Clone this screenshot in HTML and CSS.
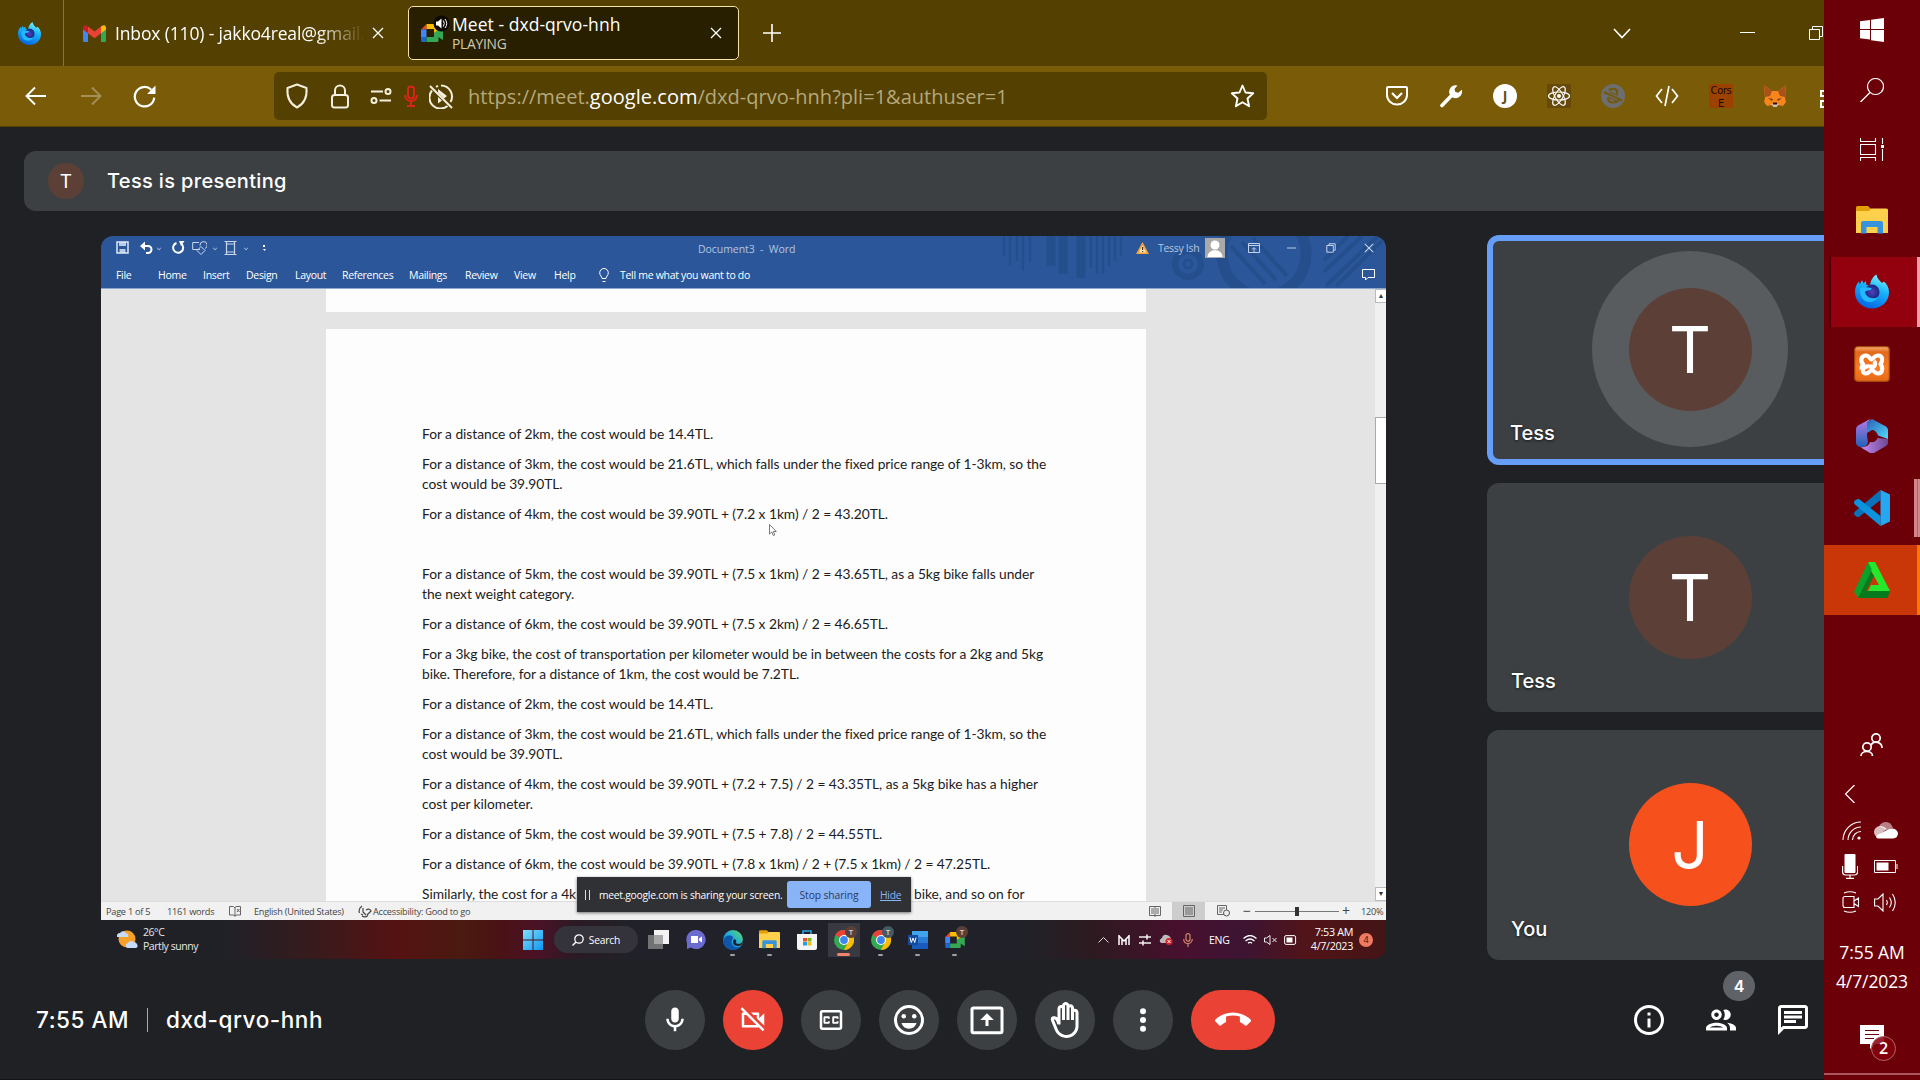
FILE: index.html
```html
<!DOCTYPE html>
<html lang="en">
<head>
<meta charset="utf-8">
<title>Meet - dxd-qrvo-hnh</title>
<link rel="stylesheet" href="styles.css">
</head>
<body>
<svg class="sprite" aria-hidden="true">
  <defs>
    <linearGradient id="ffg" x1="0.7" y1="0" x2="0.3" y2="1"><stop offset="0" stop-color="#7ff6ff"/><stop offset=".4" stop-color="#18b4fb"/><stop offset="1" stop-color="#0560e0"/></linearGradient>
    <radialGradient id="ffc"><stop offset="0" stop-color="#5040c0"/><stop offset="1" stop-color="#17287e"/></radialGradient>
    <linearGradient id="edge" x1="0" y1="1" x2="1" y2="0"><stop offset="0" stop-color="#0b62c4"/><stop offset=".5" stop-color="#22a6e0"/><stop offset="1" stop-color="#5fe05a"/></linearGradient>
    <linearGradient id="win" x1="0" y1="0" x2="1" y2="1"><stop offset="0" stop-color="#7fe0ff"/><stop offset="1" stop-color="#0c97ee"/></linearGradient>
    <linearGradient id="offa" x1="0" y1="0" x2="0" y2="1"><stop offset="0" stop-color="#b779e4"/><stop offset="1" stop-color="#1d63b8"/></linearGradient>
    <linearGradient id="offb" x1="0" y1="0" x2="1" y2="1"><stop offset="0" stop-color="#2a5fb5"/><stop offset="1" stop-color="#4fdcff"/></linearGradient>
    <linearGradient id="offc" x1="0" y1="0" x2="1" y2="0"><stop offset="0" stop-color="#c58cf2"/><stop offset="1" stop-color="#6b4791"/></linearGradient>
    <linearGradient id="xam" x1="0" y1="0" x2="0" y2="1"><stop offset="0" stop-color="#ffb27a"/><stop offset=".15" stop-color="#e06a1c"/><stop offset=".6" stop-color="#fb7a24"/><stop offset="1" stop-color="#e56a17"/></linearGradient>
  </defs>
  <symbol id="firefox" viewBox="0 0 34 34">
    <path d="M17 34C7.500 34 0 27 0 17.500 0 13 1.500 9.500 4 7l.8 3L7 5.500 8.500 9l2.500-2.500.3 4L15 11c.5-5 3-9 6.500-11 .5 4 3 6 5.500 8.500l2-1.500C32 10 34 13 34 18c0 9-7.500 16-17 16z" fill="url(#ffg)"/>
    <circle cx="17" cy="17.500" r="7.500" fill="url(#ffc)"/>
    <path d="M5 14c4-2 8-1.500 12 0-2 3-5 1-7 3.500 1 5 7 8 13 5-3 6-12 7-16 1-1.500-3-2-6-2-9.500z" fill="#23b9ff"/>
  </symbol>
  <symbol id="meetlogo" viewBox="0 0 22 18">
    <path d="M0 5.500L5.500 0v5.500z" fill="#ea4335"/><path d="M5.500 0H16a1.500 1.500 0 0 1 1.500 1.500V8L13 9V5H5.500z" fill="#fbbc04"/>
    <path d="M0 5.500h5.500v7.500H0z" fill="#4285f4"/><path d="M0 13h5.500v5H1.500A1.500 1.500 0 0 1 0 16.500z" fill="#1967d2"/>
    <path d="M5.500 13H13V9l4.500-3.500L21 2.500q1-.5 1 .7v12q0 1-1 .4L17.500 13v3.500A1.500 1.500 0 0 1 16 18H5.500z" fill="#34a853"/>
  </symbol>
  <symbol id="chrome" viewBox="0 0 20 20">
    <circle cx="10" cy="10" r="10" fill="#34a853"/><path d="M10 10L1.300 5A10 10 0 0 1 18.700 5z" fill="#ea4335"/><path d="M18.700 5A10 10 0 0 1 10 20l4-8L10 5z" fill="#fbbc04"/>
    <circle cx="10" cy="10" r="5" fill="#fff"/><circle cx="10" cy="10" r="3.900" fill="#3f86f2"/>
  </symbol>
  <symbol id="folder" viewBox="0 0 32 28">
    <path d="M0 1.500Q0 0 1.500 0H12l3 3v4H0z" fill="#e3a008"/><path d="M0 5h13l2-2.500h15.500Q32 2.500 32 4v23H0z" fill="#ffd04c"/>
    <path d="M5 27.500V17q0-2 2-2h18q2 0 2 2v10.500h-5.500V21H10.500v6.500z" fill="#3794dc"/>
  </symbol>
  <symbol id="close" viewBox="0 0 12 12"><path d="M1 1l10 10M11 1L1 11" stroke="currentColor" stroke-width="1.300" fill="none"/></symbol>
  <symbol id="restore" viewBox="0 0 14 14"><path d="M.5 3.500h10v10H.5zM3.500 3V.5h10v10H11" stroke="currentColor" fill="none"/></symbol>
</svg>

<div class="desktop">
  <header class="tabs">
    <div class="pinned"><svg width="23" height="23"><use href="#firefox"/></svg></div>
    <div class="tab">
      <svg width="23" height="17" viewBox="0 0 23 17"><path d="M0 2.500V15.500Q0 17 1.500 17H5V7z" fill="#4285f4"/><path d="M23 2.500V15.500Q23 17 21.500 17H18V7z" fill="#34a853"/><path d="M5 1.500v6.800l6.500 4.900L18 8.300V1.500l-6.500 5z" fill="#ea4335"/><path d="M0 2.500Q.5-1 4 .7l1 .8v6.800L0 4.500z" fill="#c5221f"/><path d="M23 2.500Q22.500-1 19 .7l-1 .8v6.800l5-3.800z" fill="#fbbc04"/></svg>
      <span class="tab-title">Inbox (110) - jakko4real@gmail.com</span>
      <svg class="tab-x" width="12" height="12"><use href="#close"/></svg>
    </div>
    <div class="tab active">
      <div class="fav"><svg width="22" height="18"><use href="#meetlogo"/></svg>
        <svg class="sound" width="17" height="17" viewBox="0 0 16 17"><circle cx="8" cy="8.500" r="8" fill="#0c0900"/><path d="M2.500 6.500h2L8 3.500v10l-3.500-3h-2z" fill="#fff"/><path d="M9.800 5.500q2 3 0 6M11.500 4q3.500 4.500 0 9" stroke="#fff" fill="none"/></svg></div>
      <div class="tab-text"><b>Meet - dxd-qrvo-hnh</b><small>PLAYING</small></div>
      <svg class="tab-x" width="12" height="12"><use href="#close"/></svg>
    </div>
    <svg class="plus" width="18" height="18" viewBox="0 0 18 18"><path d="M9 0v18M0 9h18" stroke="#fff" stroke-width="1.600"/></svg>
    <div class="wincontrols">
      <svg width="18" height="11" viewBox="0 0 18 11"><path d="M1 1l8 8.500L17 1" stroke="#fff" stroke-width="1.600" fill="none"/></svg>
      <svg width="15" height="2"><path d="M0 .5h15" stroke="#fff" stroke-width="1"/></svg>
      <svg class="white" width="14" height="14"><use href="#restore"/></svg>
    </div>
  </header>

  <nav class="nav">
    <div class="navbtns">
      <svg width="22" height="20" viewBox="0 0 22 20"><path d="M21 10H1.500M10 1.500L1.500 10l8.500 8.500" stroke="#fff" stroke-width="1.900" fill="none"/></svg>
      <svg width="22" height="20" viewBox="0 0 22 20"><path d="M1 10h19.500M12 1.500l8.500 8.500-8.500 8.500" stroke="#a58f56" stroke-width="1.900" fill="none"/></svg>
      <svg class="reload" width="23" height="23" viewBox="0 0 22 22"><path d="M17.500 4.500A9.300 9.300 0 1 0 20.300 12" stroke="#fff" stroke-width="2.100" fill="none"/><path d="M21.500.5v8h-8z" fill="#fff"/></svg>
    </div>
    <div class="urlbar">
      <div class="urlicons">
        <svg width="24" height="26" viewBox="0 0 24 26"><path d="M12 1.500L21.500 5c.8 9-3 16-9.500 19.500C5.500 21 1.700 14 2.500 5z" stroke="#f4efdf" stroke-width="2" fill="none" stroke-linejoin="round"/></svg>
        <svg width="20" height="25" viewBox="0 0 20 25"><rect x="2" y="11" width="16" height="12.500" rx="2.500" stroke="#f4efdf" stroke-width="2" fill="none"/><path d="M5 11V6.500a5 5 0 0 1 10 0V11" stroke="#f4efdf" stroke-width="2" fill="none"/></svg>
        <svg width="22" height="16" viewBox="0 0 22 16"><g stroke="#f4efdf" stroke-width="2" fill="none"><path d="M1 3.500h12M9.500 12.500H21"/><circle cx="18" cy="3.500" r="2.500"/><circle cx="4" cy="12.500" r="2.500"/></g></svg>
        <svg width="14" height="22" viewBox="0 0 14 22"><g stroke="#dc2418" stroke-width="2" fill="none"><rect x="4" y="1.500" width="6" height="12" rx="3"/><path d="M1 10c0 8 12 8 12 0M7 16v4M3 21h8"/></g></svg>
        <svg width="25" height="25" viewBox="0 0 25 25"><g stroke="#f4efdf" stroke-width="2" fill="none"><path d="M3 6.500A11 11 0 0 0 18.500 22M7 2.800l2-1M12 1.500a11 11 0 0 1 9.500 16.500M1 2l22 22"/></g><path d="M9 5l9 7-3 2.500L9 8.500zM9 13l4 3.500-4 3z" fill="#f4efdf"/></svg>
      </div>
      <div class="url">https://meet.<b>google.com</b>/dxd-qrvo-hnh?pli=1&amp;authuser=1</div>
      <svg class="star" width="25" height="24" viewBox="0 0 25 24"><path d="M12.500 1.500l3 7 7.700.8-5.700 5.200 1.600 7.700-6.600-4-6.600 4 1.600-7.700L1.800 9.300l7.700-.8z" stroke="#fff" stroke-width="1.900" fill="none" stroke-linejoin="round"/></svg>
    </div>
    <div class="exts">
      <svg width="24" height="24" viewBox="0 0 24 24"><path d="M3 3h18q1 0 1 1v7a10 9.500 0 0 1-20 0V4q0-1 1-1z" stroke="#fff" stroke-width="2" fill="none"/><path d="M7 9l5 5 5-5" stroke="#fff" stroke-width="2.200" fill="none"/></svg>
      <svg width="24" height="24" viewBox="0 0 24 24"><path d="M3 21.500L15 9" stroke="#fff" stroke-width="3.600" stroke-linecap="round"/><path d="M18.500 1.500l-3 3.500.8 3 3 .8 3.500-3A6.500 6.500 0 1 1 18.500 1.500z" fill="#fff"/></svg>
      <div class="ext-j">J</div>
      <svg width="24" height="24" viewBox="0 0 24 24"><rect width="24" height="24" rx="2" fill="#64490a"/><g stroke="#fff" fill="none" stroke-width="1.200"><ellipse cx="12" cy="12" rx="10.500" ry="4"/><ellipse cx="12" cy="12" rx="10.500" ry="4" transform="rotate(60 12 12)"/><ellipse cx="12" cy="12" rx="10.500" ry="4" transform="rotate(120 12 12)"/></g><circle cx="12" cy="12" r="2" fill="#fff"/></svg>
      <svg width="24" height="24" viewBox="0 0 24 24"><circle cx="12" cy="12" r="12" fill="#6c6e70"/><g stroke="#73590e" fill="none"><path d="M8 6.500a4.500 3 0 0 1 8 0v3.500M7 14q0 4.500 5 4.500t6-3.500" stroke-width="2.200"/><path d="M3 8l18 8.500" stroke-width="2"/><path d="M9 8l8 3.500M6.500 13l9 4" stroke-width="1.200"/></g></svg>
      <svg width="24" height="24" viewBox="0 0 24 24"><path d="M7 5L1.500 12 7 19M17 5l5.500 7-5.500 7M14 2l-4 20" stroke="#fff" stroke-width="1.700" fill="none"/></svg>
      <div class="ext-cors">Cors<br>E</div>
      <svg width="24" height="24" viewBox="0 0 24 24"><path d="M1 1l8 6h6l8-6-1 13 1 4-3 4-5-1-2 2h-2l-2-2-5 1-3-4 1-4z" fill="#f6851b"/><path d="M1 1l8 6-2 5-5 1zM23 1l-8 6 2 5 5 1z" fill="#a8521b"/><path d="M5 14l5 1-1 2zM19 14l-5 1 1 2z" fill="#763d16"/><path d="M8 20h8l-2.500 3h-3z" fill="#d5bfb2"/><path d="M10 18.500h4v2h-4z" fill="#1c1715"/></svg>
      <svg width="24" height="24" viewBox="0 0 24 24"><g stroke="#fff" stroke-width="2" fill="none"><rect x="4" y="7" width="6.500" height="5"/><rect x="4" y="17" width="7" height="6"/></g></svg>
    </div>
  </nav>

  <main class="meet">
    <section class="banner"><div class="mini-avatar">T</div><span>Tess is presenting</span></section>
    <section class="stage">
      <div class="share">
        <div class="word-head">
          <svg class="deco" width="390" height="52" viewBox="0 0 390 52"><g stroke="#254f8c" fill="none"><path d="M8 0v20M14 0v30M21 0v25M27 0v35M34 0v26M95 0v32M101 0v38M107 0v38M113 0v30M119 0v25M125 0v20" stroke-width="2.500"/><path d="M55 0v30M67 0v38M85 0v42" stroke-width="9"/><circle cx="192" cy="28" r="13" stroke-width="6"/><circle cx="192" cy="28" r="4" stroke-width="3"/><circle cx="268" cy="18" r="42" stroke-width="11"/><path d="M235 10l34 38M246 6l34 38M257 2l34 38M330 50l52-50M340 50l46-45M328 36l38-36M328 24l24-24" stroke-width="4"/></g></svg>
          <div class="word-title">
            <div class="qat">
              <svg width="13" height="13" viewBox="0 0 13 13"><path d="M1 1h11v11H1z" stroke="#dfe8f5" stroke-width="1.500" fill="none"/><path d="M3 1h7v4H3zM3.500 8h6v4h-6z" fill="#dfe8f5" fill-opacity=".8"/></svg>
              <svg width="13" height="13" viewBox="0 0 13 13"><path d="M2 5h6a3.500 3.500 0 0 1 0 7H6" stroke="#fff" stroke-width="2" fill="none"/><path d="M0 5l5-4.500v9z" fill="#fff"/></svg>
              <i class="car"></i>
              <svg width="13" height="13" viewBox="0 0 13 13"><path d="M4.500 2a5 5 0 1 0 5 1" stroke="#fff" stroke-width="2" fill="none"/><path d="M7 0h5.500L9 5z" fill="#fff"/></svg>
              <svg width="15" height="14" viewBox="0 0 15 14"><path d="M8 8.500H.7v-7H7M8 4.500a3.600 3.600 0 1 1 5 3M9 5.500l4 4-4 4-4-4z" stroke="#c9d8ee" fill="none"/></svg>
              <i class="car"></i>
              <svg width="13" height="14" viewBox="0 0 13 14"><path d="M2.500 0v14M10.500 0v14M.5.500h12M.5 13.500h12M2.500 3h8M2.500 11h8" stroke="#c9d8ee" stroke-width="1.200"/></svg>
              <i class="car"></i>
              <svg width="4" height="8" viewBox="0 0 4 8"><path d="M1 1h2v2H1zM1 5h3l-1.500 2z" fill="#fff"/></svg>
            </div>
            <span class="doc-name">Document3 &nbsp;- &nbsp;Word</span>
            <div class="word-right">
              <svg width="13" height="12" viewBox="0 0 13 12"><path d="M6.500 0L13 12H0z" fill="#f3a33c"/><path d="M6.500 3.500L10 10.500H3z" fill="#fbe3b5"/><path d="M6 5h1.200v3H6zM6 9h1.200v1H6z" fill="#333"/></svg>
              <span>Tessy Ish</span>
              <svg width="20" height="20" viewBox="0 0 20 20"><path fill="#a9a9a9" d="M0 0h20v20H0z"/><circle cx="10" cy="7" r="4.500" fill="#fff"/><path d="M2.500 19c0-9 15-9 15 0z" fill="#fff"/></svg>
              <svg width="12" height="10" viewBox="0 0 12 10"><path d="M.5.500h11v9H.5zM.5 2.500h11M6 9V5M4 6.500l2-2 2 2" stroke="#c5d3ea" fill="none"/></svg>
              <svg width="10" height="2"><path d="M0 1h9" stroke="#b9cae5"/></svg>
              <svg width="10" height="10" viewBox="0 0 10 10"><path d="M.8 2.500h6.500V9.200H.8zM3 2V.8h6.200v6.500H8" stroke="#c5d3ea" fill="none"/></svg>
              <svg class="pale" width="10" height="10"><use href="#close"/></svg>
            </div>
          </div>
          <div class="word-menu">
            <span>File</span><span>Home</span><span>Insert</span><span>Design</span><span>Layout</span><span>References</span><span>Mailings</span><span>Review</span><span>View</span><span>Help</span>
            <svg width="10" height="15" viewBox="0 0 10 15"><path d="M3 10.500C3 8.500.7 7.500.7 4.800a4.300 4.300 0 0 1 8.600 0C9.300 7.500 7 8.500 7 10.500zM3.500 13.500h3" stroke="#fff" fill="none"/></svg>
            <span>Tell me what you want to do</span>
            <svg class="comment" width="13" height="12" viewBox="0 0 13 12"><path d="M.5.500h12v8H6l-2.500 2.500V8.500h-3z" stroke="#fff" fill="none"/></svg>
          </div>
        </div>
        <div class="word-body">
          <div class="pages">
            <div class="prev-page"></div>
            <div class="page">
              <p>For a distance of 2km, the cost would be 14.4TL.</p>
              <p>For a distance of 3km, the cost would be 21.6TL, which falls under the fixed price range of 1-3km, so the<br>cost would be 39.90TL.</p>
              <p>For a distance of 4km, the cost would be 39.90TL + (7.2 x 1km) / 2 = 43.20TL.</p>
              <p>&nbsp;</p>
              <p>For a distance of 5km, the cost would be 39.90TL + (7.5 x 1km) / 2 = 43.65TL, as a 5kg bike falls under<br>the next weight category.</p>
              <p>For a distance of 6km, the cost would be 39.90TL + (7.5 x 2km) / 2 = 46.65TL.</p>
              <p>For a 3kg bike, the cost of transportation per kilometer would be in between the costs for a 2kg and 5kg<br>bike. Therefore, for a distance of 1km, the cost would be 7.2TL.</p>
              <p>For a distance of 2km, the cost would be 14.4TL.</p>
              <p>For a distance of 3km, the cost would be 21.6TL, which falls under the fixed price range of 1-3km, so the<br>cost would be 39.90TL.</p>
              <p>For a distance of 4km, the cost would be 39.90TL + (7.2 + 7.5) / 2 = 43.35TL, as a 5kg bike has a higher<br>cost per kilometer.</p>
              <p>For a distance of 5km, the cost would be 39.90TL + (7.5 + 7.8) / 2 = 44.55TL.</p>
              <p>For a distance of 6km, the cost would be 39.90TL + (7.8 x 1km) / 2 + (7.5 x 1km) / 2 = 47.25TL.</p>
              <p class="split"><span>Similarly, the cost for a 4k</span><span>bike, and so on for</span></p>
            </div>
          </div>
          <div class="scroll"><i>▲</i><b></b><i>▼</i></div>
          <svg class="cursor" width="8" height="12" viewBox="0 0 8 12"><path d="M.5.500v9.500l2.300-2 1.500 3.500 1.500-.7-1.500-3.300h3z" fill="#fff" stroke="#555" stroke-width=".8"/></svg>
          <div class="sharebar"><i class="pause"></i><span>meet.google.com is sharing your screen.</span><button>Stop sharing</button><u>Hide</u></div>
        </div>
        <div class="status">
          <span>Page 1 of 5</span><span>1161 words</span>
          <svg width="12" height="11" viewBox="0 0 12 11"><path d="M.5.500h4L6 2l1-1.500h4.500V9H7L6 10.500 5 9H.5zM6 2v8M8 3l2.500 3M10.500 3L8 6" stroke="#666" fill="none"/></svg>
          <span>English (United States)</span>
          <span class="acc"><svg width="14" height="13" viewBox="0 0 14 13"><path d="M4 1Q0 4 1.500 8M4 11q3 2 6-.5M5 3v4l3 3M8 5q4-2 5 1l-4 4M3 9l2 1" stroke="#444" stroke-width="1.200" fill="none"/></svg>Accessibility: Good to go</span>
          <div class="views">
            <svg width="12" height="11" viewBox="0 0 12 11"><path d="M.5.500h11v9H.5zM6 0v11M2 3h3M2 5h3M2 7h3M7 3h3M7 5h3M7 7h3" stroke="#666" fill="none"/></svg>
            <i><svg width="12" height="12" viewBox="0 0 12 12"><path d="M.5.500h11v11H.5zM2 3h8M2 5h8M2 7h8M2 9h8" stroke="#666" fill="none"/></svg></i>
            <svg width="13" height="12" viewBox="0 0 13 12"><path d="M.5.500h9v9H.5zM2 3h6M2 5h4M2 7h3" stroke="#666" fill="none"/><circle cx="9.500" cy="8" r="3" fill="#eee" stroke="#555"/></svg>
            <em>−</em><s><b></b></s><em>+</em><span>120%</span>
          </div>
        </div>
        <div class="w11">
          <svg class="weather" width="21" height="19" viewBox="0 0 21 19"><circle cx="10" cy="9" r="8.500" fill="#f6a02c"/><path d="M0 7a3 3 0 0 1 3-4 3.500 3.500 0 0 1 6 0q3 1 2 4zM9 17a3 3 0 0 1 2-4 4 4 0 0 1 6-1q4 1 3.500 5-1 1-2 1h-8z" fill="#c5dbf7"/></svg>
          <div class="wtext">26°C<br>Partly sunny</div>
          <div class="apps">
            <svg width="20" height="20" viewBox="0 0 20 20"><path d="M0 0h9.500v9.500H0zM10.500 0H20v9.500h-9.500zM0 10.500h9.500V20H0zM10.500 10.500H20V20h-9.500z" fill="url(#win)"/></svg>
            <div class="pill"><svg width="12" height="12" viewBox="0 0 12 12"><circle cx="7" cy="5" r="4.200" stroke="#fff" stroke-width="1.300" fill="none"/><path d="M4 8L.5 11.500" stroke="#fff" stroke-width="1.500"/></svg>Search</div>
            <div class="app"><svg width="21" height="19" viewBox="0 0 21 19"><path d="M6 0h15v14H6z" fill="#f3f3f3"/><path d="M0 5h15v14H0z" fill="#8f8f8f" fill-opacity=".75"/></svg></div>
            <div class="app"><svg width="20" height="19" viewBox="0 0 20 19"><path d="M10 0a9.500 9.500 0 1 1-5 17.500L1 19V13A9.500 9.500 0 0 1 10 0z" fill="#6c6bd0"/><path d="M5 6h7v7H5zM13 8.500l3-2v6l-3-2z" fill="#fff"/></svg></div>
            <div class="app dot"><svg width="20" height="20" viewBox="0 0 20 20"><circle cx="10" cy="10" r="10" fill="url(#edge)"/><path d="M10 8q-4 6 2 9 4 1 7-2-5 6-11 5Q1 18 0 11q2-6 7-5.500 3 0 3 2.500z" fill="#0e57a8"/><path d="M11 9q3 1 2 3-1 1 2 2 4 0 5-4 0 5-4 6-7 0-6-5z" fill="#1c2027"/></svg></div>
            <div class="app dot"><svg width="21" height="19"><use href="#folder"/></svg></div>
            <div class="app"><svg width="20" height="20" viewBox="0 0 20 20"><path d="M6 5V1h8v4" stroke="#2aa8e8" stroke-width="1.500" fill="none"/><path d="M0 4h20v14q0 2-2 2H2q-2 0-2-2z" fill="#f5f5f5"/><path d="M6 8h4v3.500H6z" fill="#e8502a"/><path d="M10.500 8h4v3.500h-4z" fill="#7cb518"/><path d="M6 12h4v3.500H6z" fill="#1fa2ea"/><path d="M10.500 12h4v3.500h-4z" fill="#fbb914"/></svg></div>
            <div class="app cur"><svg width="20" height="20"><use href="#chrome"/></svg><em>T</em></div>
            <div class="app dot"><svg width="20" height="20"><use href="#chrome"/></svg><em class="teal">T</em></div>
            <div class="app dot"><svg width="20" height="18" viewBox="0 0 20 18"><path d="M4 0h16v6H4z" fill="#41a5ee"/><path d="M4 6h16v6H4z" fill="#2b7cd3"/><path d="M4 12h16v6H4z" fill="#185abd"/><path d="M0 4h10v10H0z" fill="#144a9e"/><path d="M2 6.500l1.300 5L5 7l1.700 4.500L8 6.500" stroke="#fff" fill="none"/></svg></div>
            <div class="app dot"><svg width="20" height="16"><use href="#meetlogo"/></svg><em>T</em></div>
          </div>
          <div class="tray">
            <svg width="11" height="6" viewBox="0 0 11 6"><path d="M.5 5.500l5-5 5 5" stroke="#ddd" fill="none"/></svg>
            <svg width="12" height="10" viewBox="0 0 12 10"><path d="M1 0v10M4 4v6M8 4v6M11 0v10M1 1l5 5 5-5" stroke="#fff" stroke-width="1.500" fill="none"/></svg>
            <svg width="12" height="12" viewBox="0 0 12 12"><path d="M0 3h12M0 9h12M8 .5v5M4 6.500v5" stroke="#eee" stroke-width="1.600"/></svg>
            <svg width="14" height="11" viewBox="0 0 14 11"><path d="M2 9Q-1 6 3 4q1-4 5-3 4 1 4 5v3z" fill="#bbb"/><circle cx="10" cy="7.500" r="3.500" fill="#d2232a"/><path d="M8.500 6l3 3M11.500 6l-3 3" stroke="#fff"/></svg>
            <svg width="10" height="14" viewBox="0 0 10 14"><g stroke="#d2876b" stroke-width="1.200" fill="none"><rect x="3" y=".7" width="4" height="7.500" rx="2"/><path d="M.7 6c0 6 8.600 6 8.600 0M5 10.500V14"/></g></svg>
            <span class="eng">ENG</span>
            <svg width="14" height="10" viewBox="0 0 14 10"><path d="M.5 3.500q6.500-6 13 0M2.500 6q4.500-4 9 0M5 8.200q2-1.500 4 0" stroke="#fff" stroke-width="1.200" fill="none"/></svg>
            <svg width="13" height="10" viewBox="0 0 13 10"><path d="M.5 3h2L6 .5v9L2.500 7h-2zM8.500 3l4 4M12.500 3l-4 4" stroke="#eee" fill="none"/></svg>
            <svg width="13" height="10" viewBox="0 0 13 10"><rect x=".6" y=".6" width="11" height="8.800" rx="1.500" stroke="#fff" fill="none"/><path d="M2.500 2.500h6v5h-6z" fill="#fff"/></svg>
            <div class="wclock">7:53 AM<br>4/7/2023</div>
            <b class="wbadge">4</b>
          </div>
        </div>
      </div>

      <div class="tiles">
        <div class="tile speaking"><div class="ring"><div class="avatar">T</div></div><span>Tess</span></div>
        <div class="tile"><div class="avatar">T</div><span>Tess</span></div>
        <div class="tile"><div class="avatar orange"><i>J</i></div><span>You</span></div>
      </div>
    </section>

    <footer class="controls">
      <div class="meeting"><span>7:55 AM</span><i></i><span>dxd-qrvo-hnh</span></div>
      <div class="buttons">
        <button><svg viewBox="0 0 24 24"><path d="M12 14c1.660 0 3-1.340 3-3V5c0-1.660-1.340-3-3-3S9 3.340 9 5v6c0 1.660 1.340 3 3 3zm5-3c0 2.760-2.240 5-5 5s-5-2.240-5-5H5c0 3.530 2.610 6.430 6 6.920V21h2v-3.080c3.390-.49 6-3.390 6-6.920h-2z"/></svg></button>
        <button class="red"><svg viewBox="0 0 24 24"><path d="M9.560 8l-2-2-4.150-4.140L2 3.270 4.730 6H4c-.55 0-1 .45-1 1v10c0 .55.45 1 1 1h12c.21 0 .39-.08.55-.18L19.730 21l1.410-1.410-8.860-8.860L9.560 8zM5 16V8h1.730l8 8H5zm10-8v2.610l6 6V6.500l-4 4V7c0-.55-.45-1-1-1h-5.610l2 2H15z"/></svg></button>
        <button><svg viewBox="0 0 24 24"><path d="M19 4H5c-1.110 0-2 .9-2 2v12c0 1.100.89 2 2 2h14c1.100 0 2-.9 2-2V6c0-1.100-.9-2-2-2zm0 14H5V6h14v12zM7 15h3c.55 0 1-.45 1-1v-1H9.500v.5h-2v-3h2v.5H11v-1c0-.55-.45-1-1-1H7c-.55 0-1 .45-1 1v4c0 .55.45 1 1 1zm7 0h3c.55 0 1-.45 1-1v-1h-1.500v.5h-2v-3h2v.5H18v-1c0-.55-.45-1-1-1h-3c-.55 0-1 .45-1 1v4c0 .55.45 1 1 1z"/></svg></button>
        <button><svg class="big" viewBox="0 0 24 24"><circle cx="12" cy="12" r="9" fill="none" stroke="#fff" stroke-width="2"/><circle cx="8.500" cy="9.500" r="1.500"/><circle cx="15.500" cy="9.500" r="1.500"/><path d="M7 14h10a5.200 5.200 0 0 1-10 0z"/></svg></button>
        <button><svg class="big" viewBox="0 0 24 24"><rect x="2" y="4" width="20" height="16.500" rx="1" fill="none" stroke="#fff" stroke-width="2"/><path d="M12 7.500l4.500 4.500H13v4h-2v-4H7.500z"/></svg></button>
        <button><svg class="big" viewBox="0 0 24 24"><path d="M21 7c0-1.380-1.120-2.500-2.500-2.500-.17 0-.34.02-.5.05V4c0-1.380-1.120-2.500-2.500-2.500-.23 0-.46.03-.67.09C14.460.66 13.560 0 12.500 0c-1.230 0-2.250.89-2.460 2.060C9.870 2.020 9.690 2 9.500 2 8.120 2 7 3.120 7 4.500v5.890c-.34-.31-.76-.54-1.220-.66L5.010 9.500c-.83-.23-1.700.09-2.190.83-.38.57-.4 1.310-.15 1.950l2.560 6.430C6.490 21.910 9.570 24 13 24c4.420 0 8-3.580 8-8V7zm-2 9c0 3.310-2.690 6-6 6-2.610 0-4.950-1.590-5.910-4.010l-2.600-6.540.53.14c.46.12.83.46 1 .9L7 15h2V4.500c0-.28.22-.5.5-.5s.5.22.5.5V12h2V2.500c0-.28.22-.5.5-.5s.5.22.5.5V12h2V4c0-.28.22-.5.5-.5s.5.22.5.5v8h2V7c0-.28.22-.5.5-.5s.5.22.5.5v9z"/></svg></button>
        <button><svg viewBox="0 0 24 24"><circle cx="12" cy="5" r="2.400"/><circle cx="12" cy="12" r="2.400"/><circle cx="12" cy="19" r="2.400"/></svg></button>
        <button class="red end"><svg class="big" viewBox="0 0 24 24"><path d="M12 9c-1.600 0-3.150.25-4.600.72v3.100c0 .39-.23.74-.56.9-.98.49-1.870 1.120-2.660 1.850-.18.18-.43.28-.7.28-.28 0-.53-.11-.71-.29L.29 13.080c-.18-.17-.29-.42-.29-.7 0-.28.11-.53.29-.71C3.340 8.780 7.460 7 12 7s8.660 1.780 11.710 4.670c.18.18.29.43.29.71 0 .28-.11.53-.29.71l-2.480 2.480c-.18.18-.43.29-.71.29-.27 0-.52-.11-.7-.28-.79-.74-1.690-1.360-2.670-1.850-.33-.16-.56-.5-.56-.9v-3.100C15.150 9.250 13.600 9 12 9z"/></svg></button>
      </div>
      <div class="side">
        <svg viewBox="0 0 24 24"><path d="M11 7h2v2h-2zm0 4h2v6h-2zm1-9C6.480 2 2 6.480 2 12s4.480 10 10 10 10-4.480 10-10S17.520 2 12 2zm0 18c-4.410 0-8-3.590-8-8s3.590-8 8-8 8 3.590 8 8-3.590 8-8 8z"/></svg>
        <div class="people"><svg viewBox="0 0 24 24"><path d="M9 13.750c-2.340 0-7 1.170-7 3.500V19h14v-1.750c0-2.330-4.660-3.500-7-3.500zM4.340 17c.84-.58 2.870-1.250 4.660-1.250s3.820.67 4.660 1.250H4.340zM9 12c1.930 0 3.500-1.570 3.500-3.500S10.930 5 9 5 5.500 6.570 5.500 8.500 7.070 12 9 12zm0-5c.83 0 1.500.67 1.500 1.500S9.830 10 9 10s-1.500-.67-1.500-1.500S8.170 7 9 7zm7.040 6.810c1.160.84 1.960 1.960 1.960 3.440V19h4v-1.750c0-2.020-3.500-3.170-5.960-3.440zM15 12c1.930 0 3.500-1.570 3.500-3.500S16.930 5 15 5c-.54 0-1.040.13-1.500.35.63.89 1 1.980 1 3.150s-.37 2.260-1 3.150c.46.22.96.35 1.500.35z"/></svg><b>4</b></div>
        <svg viewBox="0 0 24 24"><path d="M4 4h16v12H5.170L4 17.170V4m0-2c-1.100 0-1.990.9-1.990 2L2 22l4-4h14c1.100 0 2-.9 2-2V4c0-1.100-.9-2-2-2H4zm2 10h8v2H6v-2zm0-3h12v2H6V9zm0-3h12v2H6V6z"/></svg>
      </div>
    </footer>
  </main>
</div>

<aside class="taskbar">
  <div class="slot"><svg width="24" height="24" viewBox="0 0 24 24"><path d="M0 3.300L10 1.900V11H0zM11 1.800L24 0v11H11zM0 12h10v9.600L0 20.200zM11 12h13v12l-13-1.800z" fill="#fff"/></svg></div>
  <div class="slot"><svg width="24" height="24" viewBox="0 0 24 24"><circle cx="15.500" cy="8.500" r="8" stroke="#fff" stroke-width="1.200" fill="none"/><path d="M10 14.500L.5 24" stroke="#fff" stroke-width="1.300"/></svg></div>
  <div class="slot"><svg width="24" height="24" viewBox="0 0 24 24"><path d="M.5 6.500h15v10H.5zM.5 0v3.500h15V0M.5 23v-3.500h15V23M22.500 0v6M22.500 11v12" stroke="#fff" stroke-width="1.100" fill="none"/><path d="M21 7h3v3h-3z" fill="#fff"/></svg></div>
  <div class="slot pin first"><svg width="32" height="28"><use href="#folder"/></svg></div>
  <div class="slot pin ff"><svg width="34" height="35"><use href="#firefox"/></svg></div>
  <div class="slot pin"><svg width="36" height="36" viewBox="0 0 36 36"><rect x=".7" y=".7" width="34.600" height="34.600" rx="3" fill="url(#xam)" stroke="#a54a0f" stroke-width="1.200"/><path d="M15 20.500h5a4 4 0 0 0 0-5.500M15 20.500C8 19 7 28 12 27.500c4-.3 4-3.500 6-3.500s2 3.500 6 3.500c5 0 5-6.500 2.500-9.500C29 15 29 9.500 24 9.500c-4 0-5 4-6.500 4S15.500 9.500 12 9.500c-5 0-6 5.500-3 8.500-1.500 2-1.500 4-1.500 5.500" stroke="#fff" stroke-width="4.200" fill="none" stroke-linejoin="round"/></svg></div>
  <div class="slot pin"><svg width="32" height="34" viewBox="0 0 32 34"><path d="M14 0L2 6.500Q0 8 0 10v14q0 2 2 3l3 1.500q6-1 7-5l-1-7V6z" fill="url(#offa)"/><path d="M11 3l5-3 14 7.500Q32 9 32 11v9l-10-3.500Q20 11 16 11l-5 3z" fill="url(#offb)"/><path d="M5 28.500q8-1 9-5.500 6 1 7.500-4L32 20v4q0 2-2 3l-12 7h-4z" fill="url(#offc)"/></svg></div>
  <div class="slot pin vs"><svg width="36" height="36" viewBox="0 0 36 36"><path d="M26.500 0v10L5 27q-2 .5-4-1.500-2-2 0-4z" fill="#0873bb"/><path d="M26.500 36V26L5 9Q3 8.500 1 10.500q-2 2 0 4z" fill="#0a94df"/><path d="M26.500 0L36 4.500v27L26.500 36z" fill="#26a7f2"/></svg></div>
  <div class="slot pin green"><svg width="36" height="36" viewBox="0 0 36 36"><path d="M14 0h7l15 29H14l3-6h8l-8-14.500z" fill="#25e82c"/><path d="M14 0l3.500 7-.5 4L5 36l-5-6z" fill="#0aa02a"/><path d="M17 10l3 4-8 15h24l-2.500 7H4z" fill="#077a1d"/></svg></div>
  <div class="tray10">
    <svg class="duo" width="24" height="24" viewBox="0 0 24 24"><g stroke="#fff" stroke-width="1.700" fill="none"><circle cx="16" cy="5" r="4.200"/><circle cx="7" cy="14" r="4.200"/><path d="M1 23c0-6 11.500-6 11.500 0M11 12c3-5 11-3 11 3"/></g></svg>
    <div class="grid10">
      <svg width="12" height="18" viewBox="0 0 12 18"><path d="M10.500 0l-9 9 9 9" stroke="#fff" stroke-width="1.200" fill="none"/></svg><i></i>
      <svg width="20" height="19" viewBox="0 0 20 19"><path d="M1 19A18 18 0 0 1 19 1M6 19A13 13 0 0 1 19 6M10.500 19a8.500 8.500 0 0 1 8.500-8.500" stroke="#fff" stroke-width="1.100" fill="none"/><circle cx="17" cy="17" r="1.600" fill="#fff"/></svg>
      <svg width="24" height="17" viewBox="0 0 24 17"><path d="M5 4.500Q7 0 12 0t7 6l-6 2z" fill="#fff" fill-opacity=".5"/><path d="M3 15Q0 13 0 9.500 1 4 7 4q3 0 6 3L3 14z" fill="#fff" fill-opacity=".75"/><path d="M4 16.500Q1 16 3 13l12-6q7-2 9 4 0 5-5 5.500z" fill="#fff"/></svg>
      <svg width="16" height="25" viewBox="0 0 16 25"><rect x="2.500" width="11" height="19" rx="1" fill="#fff"/><path d="M.6 12v6q0 3 3 3h9q3 0 3-3v-6M8 21v3M4 24.300h8" stroke="#fff" stroke-width="1.200" fill="none"/></svg>
      <svg width="24" height="13" viewBox="0 0 24 13"><path d="M.5.500h21v12H.5zM23 4v5" stroke="#fff" fill="none"/><path d="M2.500 2.500h12v8h-12z" fill="#fff"/></svg>
      <svg width="18" height="22" viewBox="0 0 18 22"><path d="M3 5.500h9v11H3q-2 0-2-2v-7q0-2 2-2zM12 10l4.500-3v8.500L12 12.500M2 2q6-2.500 12 0M2 20q6 2.500 12 0" stroke="#fff" stroke-width="1.100" fill="none"/></svg>
      <svg width="23" height="19" viewBox="0 0 23 19"><path d="M.6 6H4l5-5v17l-5-5H.6zM12.500 7q1.500 2.500 0 5M15.500 4.500q3.500 5 0 10M18.500 1q5.500 8.500 0 17" stroke="#fff" stroke-width="1.100" fill="none"/></svg>
    </div>
    <div class="clock">7:55 AM<br>4/7/2023</div>
    <div class="notif"><svg width="24" height="24" viewBox="0 0 24 24"><path d="M0 0h24v19H15l-5 5v-5H0z" fill="#fff"/><path d="M5 5.500h14M5 9.500h14M5 13.500h9" stroke="#6c0009" stroke-width="1.200"/></svg><b>2</b></div>
  </div>
</aside>
</body>
</html>
```
FILE: styles.css
```css
* { box-sizing: border-box; }
body {
  margin: 0; width: 1920px; height: 1080px; overflow: hidden; display: flex;
  font-family: "Open Sans", "Noto Sans", sans-serif; color: #fff; background: #202124;
}
svg { display: block; flex: none; }
i, em { font-style: normal; }
button { border: 0; padding: 0; font: inherit; }
.sprite { position: absolute; width: 0; height: 0; }
.desktop { width: 1824px; height: 1080px; overflow: hidden; display: flex; flex-direction: column; flex: none; }
.white { color: #fff; }
.pale { color: #c5d3ea; }

/* browser tabs */
.tabs { height: 66px; background: #544000; display: flex; align-items: center; flex: none; }
.pinned { width: 64px; height: 66px; border-right: 1px solid #837440; display: flex; align-items: center; padding-left: 18px; }
.tab { width: 344px; display: flex; align-items: center; padding-left: 19px; height: 54px; font-size: 17.500px; letter-spacing: -.15px; flex: none; }
.tab-title { margin-left: 9px; width: 252px; overflow: hidden; white-space: nowrap; -webkit-mask-image: linear-gradient(90deg, #000 80%, transparent 99%); mask-image: linear-gradient(90deg, #000 80%, transparent 99%); }
.tab-x { margin-left: 5px; }
.tab.active { width: 331px; height: 54px; background: #281f00; border: 1px solid #f5e3a8; border-radius: 5px; padding-left: 12px; letter-spacing: .05px; }
.fav { position: relative; width: 31px; }
.sound { position: absolute; left: 12px; top: -9px; }
.tab-text { width: 253px; display: flex; flex-direction: column; line-height: 20px; }
.tab-text b { font-weight: 400; }
.tab-text small { font-size: 13.800px; line-height: 19px; color: #d0cab5; letter-spacing: -.25px; }
.active .tab-x { margin-left: 5px; }
.plus { margin-left: 24px; }
.wincontrols { margin-left: auto; display: flex; align-items: center; padding-right: 1px; }
.wincontrols svg:nth-child(2) { margin: 0 54px 0 109px; }

/* navigation bar */
.nav { height: 61px; background: #795b08; border-bottom: 1px solid #544000; display: flex; align-items: center; flex: none; }
.navbtns { width: 274px; padding-left: 25px; display: flex; gap: 33px; align-items: center; flex: none; }
.reload { margin-left: -2px; }
.urlbar { width: 993px; height: 48px; background: #544000; border-radius: 5px; display: flex; align-items: center; padding-left: 11px; flex: none; }
.urlicons { display: grid; grid-template-columns: 45px 40px 34px 25px 40px; align-items: center; flex: none; }
.url { width: 762px; font-size: 20px; letter-spacing: .02px; color: #b5a87c; margin-left: -1px; white-space: nowrap; flex: none; }
.url b { font-weight: 400; color: #fff; }
.exts { display: flex; gap: 30px; margin-left: 118px; align-items: center; flex: none; }
.ext-j { width: 24px; height: 24px; border-radius: 50%; background: #fff; color: #66500f; font: 700 14px/24px "Open Sans", sans-serif; text-align: center; }
.ext-cors { width: 24px; height: 24px; background: #9b4200; color: #1a0c00; font: 10px/13px "DejaVu Sans", sans-serif; text-align: center; letter-spacing: -.4px; white-space: nowrap; }

/* meet */
.meet { flex: 1; background: #202124; padding: 24px 0 0 24px; display: flex; flex-direction: column; border-bottom: 1px solid #15131a; font-family: Inter, sans-serif; }
.banner { height: 60px; background: #3c4043; border-radius: 12px 0 0 12px; display: flex; align-items: center; padding-left: 24px; font-size: 20px; letter-spacing: .35px; font-weight: 500; flex: none; }
.banner span { margin-left: 23px; }
.mini-avatar { width: 36px; height: 36px; border-radius: 50%; background: #5c4037; font-size: 19px; line-height: 37px; text-align: center; font-weight: 400; }
.stage { display: flex; padding: 24px 0 0 77px; height: 749px; flex: none; }
.share { width: 1285px; height: 723px; margin-top: 1px; border-radius: 12px; overflow: hidden; display: flex; flex-direction: column; font-family: "Open Sans", "Noto Sans", sans-serif; flex: none; }
.word-head { position: relative; height: 53px; background: #2b579a; border-bottom: 1px solid #8ea7cc; flex: none; font-size: 10.500px; }
.deco { position: absolute; right: 0; top: 0; }
.word-title { position: relative; display: flex; height: 23px; align-items: center; }
.qat { width: 597px; padding-left: 15px; display: grid; grid-template-columns: 24px 17px 15px 20px 21px 11px 20px 18px 8px; align-items: center; flex: none; }
.car { width: 4px; height: 4px; border: solid #a8bcdc; border-width: 0 1px 1px 0; transform: rotate(45deg) scale(.8); }
.doc-name { width: 438px; color: #b4c5e0; letter-spacing: -.05px; padding-top: 2px; flex: none; }
.word-right { display: grid; grid-template-columns: 22px 47px 43px 39px 39px 38px 10px; align-items: center; color: #b4c5e0; white-space: nowrap; letter-spacing: -.3px; }
.word-menu { position: relative; height: 28px; padding-left: 15px; display: grid; grid-template-columns: 42px 45px 43px 49px 47px 67px 56px 49px 40px 45px 21px 742px 13px; align-items: center; white-space: nowrap; letter-spacing: -.3px; padding-top: 4px; }
.word-body { position: relative; height: 612px; background: #e4e4e4; display: flex; flex: none; }
.pages { width: 820px; margin-left: 225px; }
.prev-page { height: 23px; background: #fdfdfd; }
.page { margin-top: 17px; height: 572px; background: #fdfdfd; padding: 95px 0 0 96px; color: #1c1c1c; font: 13.800px/20px Lato, "Open Sans", sans-serif; letter-spacing: -.045px; white-space: nowrap; overflow: hidden; }
.page p { margin: 0 0 10.030px; }
.split span:first-child { display: inline-block; width: 492px; }
.scroll { width: 11px; margin-left: auto; background: #f0f0f0; display: flex; flex-direction: column; color: #333; }
.scroll i { height: 14px; background: #fff; border: 1px solid #bbb; border-right: 0; font-size: 7px; line-height: 12px; text-align: center; }
.scroll b { height: 67px; margin: 114px 0 auto; background: #fff; border: 1px solid #aaa; border-right: 0; }
.cursor { position: absolute; left: 668px; top: 235px; }
.sharebar { position: absolute; left: 476px; top: 588px; width: 334px; height: 35px; background: #303134; display: flex; align-items: center; font-size: 10.300px; letter-spacing: -.25px; z-index: 1; box-shadow: 0 1px 3px #0008; white-space: nowrap; }
.pause { width: 5px; height: 10px; border: solid #ddd; border-width: 0 1.500px; margin: 0 9px 0 8px; flex: none; }
.sharebar span { width: 188px; flex: none; }
.sharebar button { width: 84px; height: 27px; background: #8ab4f8; color: #2a3b5a; border-radius: 3px; letter-spacing: -.1px; flex: none; }
.sharebar u { margin-left: 9px; color: #8ab4f8; }
.status { height: 19px; background: #f1f1f1; border-top: 1px solid #dcdcdc; display: grid; grid-template-columns: 61px 62px 25px 104px 1fr auto; align-items: center; padding-left: 5px; color: #444; font-size: 9.200px; letter-spacing: -.25px; white-space: nowrap; flex: none; }
.acc { display: flex; gap: 1px; align-items: center; }
.views { display: flex; align-items: center; width: 237px; height: 18px; }
.views > i { width: 33px; height: 18px; background: #cdcdcd; margin: 0 12px 0 11px; display: flex; align-items: center; justify-content: center; flex: none; }
.views em { font-size: 14px; width: 8px; margin-left: 13px; line-height: 16px; flex: none; }
.views s { width: 84px; height: 1px; background: #777; display: flex; align-items: center; justify-content: center; text-decoration: none; margin-left: 4px; flex: none; }
.views s + em { margin-left: 3px; }
.views s b { width: 4px; height: 9px; background: #333; }
.views span { margin-left: 11px; font-size: 9.200px; }
.w11 { height: 39px; display: flex; align-items: center; flex: none; background: linear-gradient(90deg, #202127 0 10%, #3a1a1c 17%, #551212 23%, #4a1a10 28%, #4a1214 31%, #4b1226 34%, #2a1a24 37%, #212229 41% 72%, #2c1a20 77%, #48102e 84%, #3d1433 89%, #521418 94%, #431416 100%); }
.weather { margin-left: 16px; }
.wtext { margin-left: 5px; width: 380px; font-size: 10.500px; line-height: 14px; letter-spacing: -.45px; color: #e6e6e6; margin-top: -1px; flex: none; }
.apps { display: flex; align-items: center; height: 39px; flex: none; }
.pill { width: 84px; height: 27px; border-radius: 14px; background: #34333b; margin: 0 2px 0 11px; display: flex; align-items: center; justify-content: center; gap: 5px; font-size: 10.300px; letter-spacing: -.2px; }
.app { position: relative; width: 37px; height: 39px; display: flex; align-items: center; justify-content: center; }
.dot::after { content: ""; position: absolute; bottom: 3px; left: 16px; width: 5px; height: 2px; border-radius: 1px; background: #a0a0a0; }
.cur { background: linear-gradient(#393a41, #393a41) center / 32px 34px no-repeat; }
.cur::after { content: ""; position: absolute; bottom: 3px; left: 12px; width: 13px; height: 3px; border-radius: 2px; background: #f2836b; }
.app em { position: absolute; right: 5px; top: 6px; width: 12px; height: 12px; border-radius: 50%; background: #5c4037; font-size: 8px; line-height: 12px; text-align: center; }
.app em.teal { background: #455a64; }
.tray { margin-left: auto; display: grid; grid-template-columns: 20px 21px 20px 24px 26px 34px 21px 20px 22px 49px 20px; align-items: center; padding-right: 11px; font-size: 10.500px; letter-spacing: -.3px; }
.wclock { text-align: right; line-height: 14px; font-size: 10.800px; padding-right: 2px; margin-top: -1px; letter-spacing: -.35px; }
.wbadge { width: 14px; height: 14px; border-radius: 50%; background: #ef7a5f; color: #3a1512; font-size: 9px; line-height: 14px; text-align: center; margin-left: 4px; font-weight: 400; }

/* participant tiles */
.tiles { margin-left: 101px; width: 406px; display: flex; flex-direction: column; gap: 18px; flex: none; }
.tile { position: relative; height: 229.600px; background: #3c4043; border-radius: 12px; display: flex; align-items: center; justify-content: center; flex: none; }
.speaking { border: 6px solid #669df6; }
.ring { width: 196px; height: 196px; border-radius: 50%; background: #595c5f; display: flex; align-items: center; justify-content: center; margin-bottom: 2px; padding-top: 2px; }
.avatar { width: 123px; height: 123px; border-radius: 50%; background: #5c4037; font-size: 65px; line-height: 123px; text-align: center; }
.orange { background: #f6511d; }
.tile span { position: absolute; left: 24px; bottom: 18px; font-size: 20px; line-height: 26px; font-weight: 500; text-shadow: 0 1px 3px #000a; }
.speaking span { left: 17px; bottom: 13px; }

/* meet controls */
.controls { flex: 1; display: flex; align-items: center; }
.meeting { width: 621px; padding-left: 12px; display: flex; align-items: center; font-size: 22.500px; letter-spacing: .55px; font-weight: 500; flex: none; white-space: nowrap; }
.meeting i { width: 1px; height: 24px; background: #aaa; margin: 0 18px; }
.buttons { display: flex; gap: 18px; flex: none; }
.buttons button { width: 60px; height: 60px; border-radius: 50%; background: #3c4043; display: flex; align-items: center; justify-content: center; }
.buttons svg { width: 30px; height: 30px; fill: #fff; }
.buttons svg.big { width: 36px; height: 36px; }
.buttons .red { background: #ea4335; }
.buttons .end { width: 84px; border-radius: 30px; }
.side { margin-left: 356px; display: flex; gap: 36px; flex: none; }
.side svg { width: 36px; height: 36px; fill: #fff; }
.people { position: relative; }
.people b { position: absolute; left: 20px; top: -31px; width: 32px; height: 30px; border-radius: 15px; background: #5f6368; font-size: 16px; line-height: 30px; text-align: center; font-weight: 600; }

/* vertical taskbar */
.taskbar { width: 96px; height: 1080px; background: #6c0009; display: flex; flex-direction: column; flex: none; }
.slot { height: 60px; display: flex; align-items: center; justify-content: center; flex: none; }
.pin { height: 70px; margin-bottom: 2px; }
.first { margin-top: 5px; }
.ff { background: #93000e; border-left: 2px solid #50000a; border-right: 3px solid #ff9ba3; margin-left: 5px; padding: 0 4px 2px 0; }
.vs { background: linear-gradient(90deg, #cf878c 50%, #a86c70 50% 66%, #cf878c 66%) right / 6px 58px no-repeat; }
.green { background: #c93709; border-right: 3px solid #ff7300; padding-left: 3px; }
.tray10 { flex: 1; display: flex; flex-direction: column; align-items: center; padding-top: 116px; }
.grid10 { display: grid; grid-template-columns: 32px 24px; grid-template-rows: 37px 37px 34px 38px; width: 56px; margin-top: 18px; margin-left: -4px; align-items: center; flex: none; }
.grid10 svg:first-child { margin-left: 2px; }
.clock { margin-top: 17px; font-size: 17.500px; line-height: 29px; letter-spacing: -.1px; text-align: center; white-space: nowrap; }
.notif { position: relative; margin-top: 29px; height: 50px; width: 96px; padding-left: 36px; border-bottom: 2px solid #a9555b; }
.notif b { position: absolute; left: 47px; top: 11px; width: 25px; height: 25px; border: 1px solid #b06468; border-radius: 50%; background: #85000ddd; font-size: 16px; line-height: 23px; text-align: center; font-weight: 600; }
```
